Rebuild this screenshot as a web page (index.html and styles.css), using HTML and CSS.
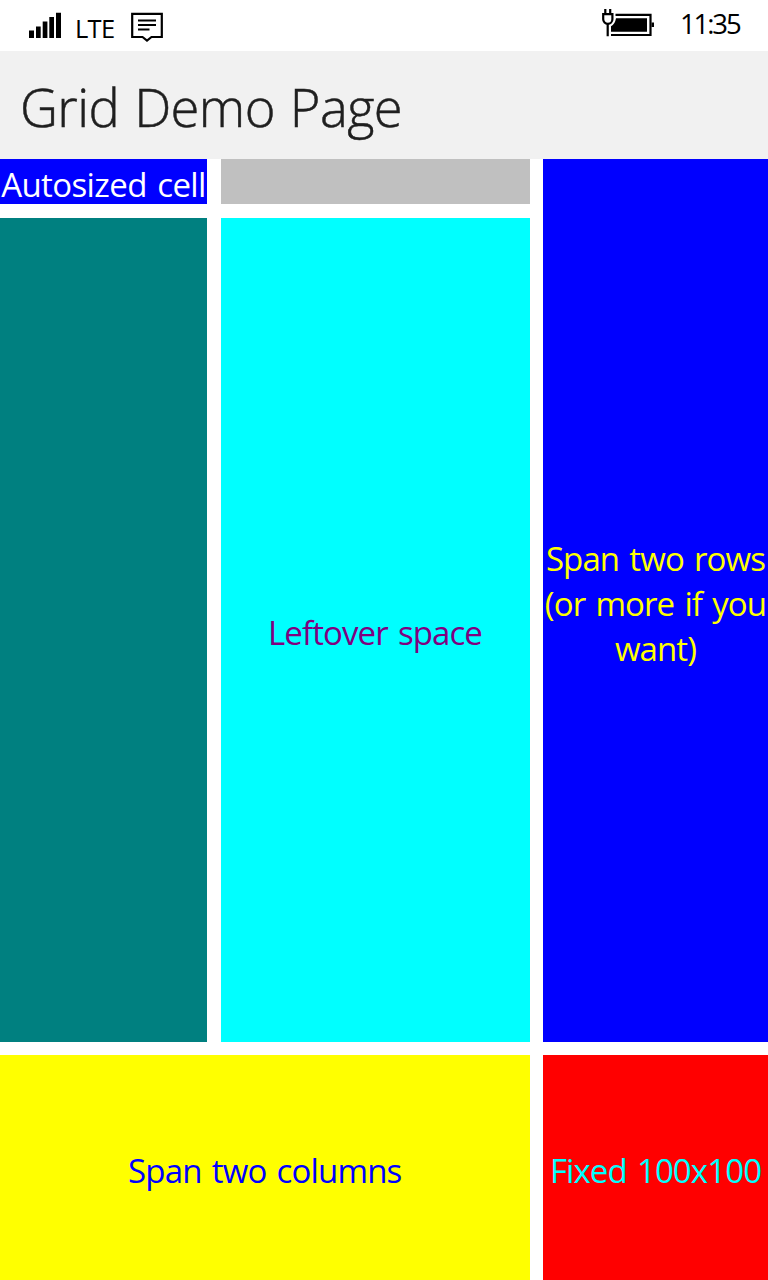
FILE: index.html
```html
<!DOCTYPE html>
<html lang="en">
<head>
<meta charset="utf-8">
<title>Grid Demo Page</title>
<link rel="stylesheet" href="styles.css">
</head>
<body>
<div class="status-bar">
  <svg class="signal" width="33" height="26" viewBox="0 0 33 26"><path d="M0 18.500h5V26H0zM7 14.500h4.700V26H7zM13.700 9.500h4.700V26h-4.700zM20.300 5h4.700v21h-4.700zM27 .700h5V26h-5z"/></svg>
  <span class="network">LTE</span>
  <svg class="message" width="32" height="30" viewBox="0 0 32 30"><path d="M1.200 1.900h29.600v23.100H20.500L16 28.500l-4.500-3.500H1.200z" fill="none" stroke="#000" stroke-width="2.200"/><path d="M7 8.500h18M7 13h18M7 17.500h11.500" stroke="#000" stroke-width="2"/></svg>
  <svg class="battery" width="53" height="28" viewBox="0 0 53 28"><path d="M3.300 0v5M8.200 0v5M5.700 14v13.300" fill="none" stroke="#000" stroke-width="2.200"/><path d="M1.200 5.200h9.200v5a4.600 4.600 0 0 1-9.200 0z" fill="none" stroke="#000" stroke-width="2.200"/><path d="M13.500 5.800H48.500v20.200H9" fill="none" stroke="#000" stroke-width="2.200"/><path d="M14 9.200h31v13.500H9v-5.500q4-2 5-8zM49.500 13.500h2.500v4.500h-2.500z"/></svg>
  <span class="clock">11:35</span>
</div>
<header class="title-bar"><h1 class="title">Grid Demo Page</h1></header>
<main class="grid">
  <div class="cell auto"><span class="label">Autosized cell</span></div>
  <div class="cell silver"></div>
  <div class="cell rows"><span class="label">Span two rows<br>(or more if you<br>want)</span></div>
  <div class="cell teal"></div>
  <div class="cell leftover"><span class="label">Leftover space</span></div>
  <div class="cell columns"><span class="label">Span two columns</span></div>
  <div class="cell fixed"><span class="label">Fixed 100x100</span></div>
</main>
</body>
</html>
```

FILE: styles.css
```css
* { box-sizing: border-box; }
body {
  margin: 0;
  width: 768px;
  height: 1280px;
  display: flex;
  flex-direction: column;
  overflow: hidden;
  background: #fff;
  font-family: "Open Sans", "Noto Sans", sans-serif;
}
.status-bar {
  height: 51px;
  padding: 0 28px 0 29px;
  display: flex;
  align-items: flex-start;
  color: #000;
}
.signal { margin-top: 12px; }
.network {
  margin: 10px 0 0 13px;
  width: 56px;
  font-size: 25.500px;
  line-height: 36px;
  letter-spacing: -0.700px;
}
.message { margin-top: 12px; }
.battery { margin: 9px 25px 0 auto; }
.clock {
  margin-top: 6px;
  width: 60px;
  font-size: 27.500px;
  line-height: 36px;
  letter-spacing: -2.100px;
  white-space: nowrap;
}
.title-bar {
  height: 108px;
  padding: 17px 20px 0;
  background: #f1f1f1;
}
.title {
  margin: 0;
  font-size: 52.500px;
  font-weight: 300;
  line-height: 78px;
  letter-spacing: -0.600px;
  word-spacing: 2px;
  -webkit-text-stroke: 0.500px #1f1f1f;
  color: #1f1f1f;
  white-space: nowrap;
}
.grid {
  flex: 1;
  display: grid;
  grid-template-columns: 207px 1fr 225px;
  grid-template-rows: 45px 1fr 225px;
  gap: 13.500px;
}
.cell {
  display: flex;
  align-items: center;
  justify-content: center;
  min-width: 0;
  min-height: 0;
}
.label {
  padding-top: 5px;
  font-size: 33px;
  line-height: 45px;
  letter-spacing: -0.900px;
  word-spacing: 2.500px;
  text-align: center;
  white-space: nowrap;
}
.auto { background: #00f; color: #fff; }
.auto .label { letter-spacing: -0.600px; }
.silver { background: silver; }
.rows { grid-column: 3; grid-row: 1 / span 2; background: #00f; color: #ff0; }
.rows .label { padding-top: 7px; }
.teal { background: teal; }
.leftover { background: #0ff; color: purple; }
.columns { grid-column: 1 / span 2; background: #ff0; color: #00f; }
.columns .label { letter-spacing: -0.850px; }
.fixed { background: red; color: #0ff; }
```
